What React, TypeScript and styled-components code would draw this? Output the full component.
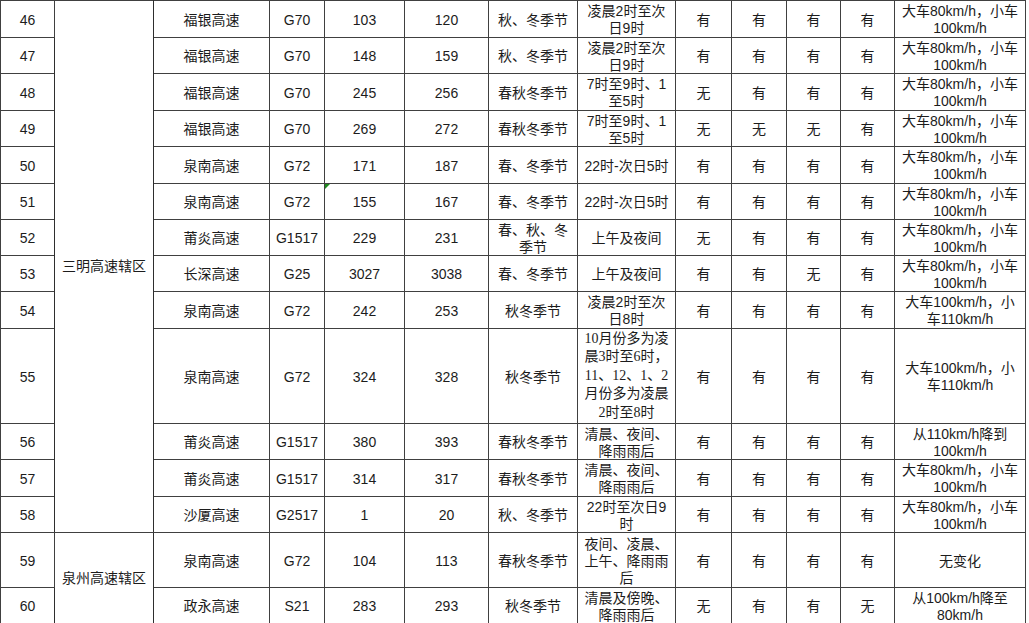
import React from "react";
import styled, { createGlobalStyle } from "styled-components";

const GlobalStyle = createGlobalStyle`
  html, body {
    margin: 0;
    padding: 0;
    background: #ffffff;
  }
  body {
    font-family: "Liberation Sans", "Noto Sans CJK SC", sans-serif;
    color: #1c1c1c;
  }
`;

type Flag = "有" | "无";

interface RowData {
  no: number;
  road: string;
  code: string;
  from: string;
  to: string;
  season: string;
  time: string;
  flags: Flag[];
  speed: string;
  height: number;
  serifTime?: boolean;
  marker?: boolean;
}

const SPEED_A = "大车80km/h，小车\n100km/h";
const SPEED_B = "大车100km/h，小\n车110km/h";

const rows: RowData[] = [
  { no: 46, road: "福银高速", code: "G70", from: "103", to: "120", season: "秋、冬季节", time: "凌晨2时至次\n日9时", flags: ["有", "有", "有", "有"], speed: SPEED_A, height: 37 },
  { no: 47, road: "福银高速", code: "G70", from: "148", to: "159", season: "秋、冬季节", time: "凌晨2时至次\n日9时", flags: ["有", "有", "有", "有"], speed: SPEED_A, height: 36 },
  { no: 48, road: "福银高速", code: "G70", from: "245", to: "256", season: "春秋冬季节", time: "7时至9时、1\n至5时", flags: ["无", "有", "有", "有"], speed: SPEED_A, height: 37 },
  { no: 49, road: "福银高速", code: "G70", from: "269", to: "272", season: "春秋冬季节", time: "7时至9时、1\n至5时", flags: ["无", "无", "无", "有"], speed: SPEED_A, height: 36 },
  { no: 50, road: "泉南高速", code: "G72", from: "171", to: "187", season: "春、冬季节", time: "22时-次日5时", flags: ["有", "有", "有", "有"], speed: SPEED_A, height: 37 },
  { no: 51, road: "泉南高速", code: "G72", from: "155", to: "167", season: "春、冬季节", time: "22时-次日5时", flags: ["有", "有", "有", "有"], speed: SPEED_A, height: 36, marker: true },
  { no: 52, road: "莆炎高速", code: "G1517", from: "229", to: "231", season: "春、秋、冬\n季节", time: "上午及夜间", flags: ["无", "有", "有", "有"], speed: SPEED_A, height: 36 },
  { no: 53, road: "长深高速", code: "G25", from: "3027", to: "3038", season: "春、冬季节", time: "上午及夜间", flags: ["有", "有", "无", "有"], speed: SPEED_A, height: 36 },
  { no: 54, road: "泉南高速", code: "G72", from: "242", to: "253", season: "秋冬季节", time: "凌晨2时至次\n日8时", flags: ["有", "有", "有", "有"], speed: SPEED_B, height: 37 },
  { no: 55, road: "泉南高速", code: "G72", from: "324", to: "328", season: "秋冬季节", time: "10月份多为凌\n晨3时至6时，\n11、12、1、2\n月份多为凌晨\n2时至8时", flags: ["有", "有", "有", "有"], speed: SPEED_B, height: 95, serifTime: true },
  { no: 56, road: "莆炎高速", code: "G1517", from: "380", to: "393", season: "春秋冬季节", time: "清晨、夜间、\n降雨雨后", flags: ["有", "有", "有", "有"], speed: "从110km/h降到\n100km/h", height: 36 },
  { no: 57, road: "莆炎高速", code: "G1517", from: "314", to: "317", season: "春秋冬季节", time: "清晨、夜间、\n降雨雨后", flags: ["有", "有", "有", "有"], speed: SPEED_A, height: 37 },
  { no: 58, road: "沙厦高速", code: "G2517", from: "1", to: "20", season: "秋、冬季节", time: "22时至次日9\n时", flags: ["有", "有", "有", "有"], speed: SPEED_A, height: 36 },
  { no: 59, road: "泉南高速", code: "G72", from: "104", to: "113", season: "春秋冬季节", time: "夜间、凌晨、\n上午、降雨雨\n后", flags: ["有", "有", "有", "有"], speed: "无变化", height: 55 },
  { no: 60, road: "政永高速", code: "S21", from: "283", to: "293", season: "秋冬季节", time: "清晨及傍晚、\n降雨雨后", flags: ["无", "有", "有", "无"], speed: "从100km/h降至\n80km/h", height: 36 },
];

const regions: Record<number, { name: string; span: number }> = {
  46: { name: "三明高速辖区", span: 13 },
  59: { name: "泉州高速辖区", span: 2 },
};

const columnWidths = [54, 99, 116, 55, 80, 84, 89, 98, 56, 55, 54, 54, 131];

const Sheet = styled.table`
  width: 1025px;
  table-layout: fixed;
  border-collapse: collapse;
  font-size: 14px;
`;

const Cell = styled.td`
  position: relative;
  border: 1px solid #404040;
  padding: 0;
  text-align: center;
  vertical-align: middle;
  color: #1c1c1c;
`;

const RegionCell = styled(Cell)`
  padding: 0 2px;
  line-height: 17px;
  border-left-color: #2e2e2e;
  border-right-color: #2e2e2e;
`;

const Content = styled.div<{ $h: number; $serif?: boolean }>`
  height: ${(p) => p.$h - 1}px;
  display: flex;
  flex-direction: column;
  justify-content: center;
  align-items: center;
  padding-top: ${(p) => (p.$serif ? 0 : 2)}px;
  box-sizing: border-box;
  overflow: hidden;
  font-family: ${(p) =>
    p.$serif
      ? `"Liberation Serif", "Noto Sans CJK SC", serif`
      : `"Liberation Sans", "Noto Sans CJK SC", sans-serif`};
`;

const Line = styled.span<{ $lh: number }>`
  display: block;
  flex: none;
  height: ${(p) => p.$lh}px;
  line-height: ${(p) => p.$lh}px;
  white-space: nowrap;
`;

const ErrorMark = styled.span`
  position: absolute;
  left: 0;
  top: 0;
  width: 0;
  height: 0;
  border-top: 5px solid #1f8a1f;
  border-right: 5px solid transparent;
`;

function Text({ value, h, serif }: { value: string | number; h: number; serif?: boolean }) {
  const lines = String(value).split("\n");
  const lh = serif ? 18.5 : 17;
  return (
    <Content $h={h} $serif={serif}>
      {lines.map((l, i) => (
        <Line key={i} $lh={lh}>
          {l}
        </Line>
      ))}
    </Content>
  );
}

export default function App() {
  return (
    <>
      <GlobalStyle />
      <Sheet>
        <colgroup>
          {columnWidths.map((w, i) => (
            <col key={i} style={{ width: w }} />
          ))}
        </colgroup>
        <tbody>
          {rows.map((r) => {
            const region = regions[r.no];
            const h = r.height;
            return (
              <tr key={r.no}>
                <Cell>
                  <Text value={r.no} h={h} />
                </Cell>
                {region && <RegionCell rowSpan={region.span}>{region.name}</RegionCell>}
                <Cell>
                  <Text value={r.road} h={h} />
                </Cell>
                <Cell>
                  <Text value={r.code} h={h} />
                </Cell>
                <Cell>
                  {r.marker && <ErrorMark />}
                  <Text value={r.from} h={h} />
                </Cell>
                <Cell>
                  <Text value={r.to} h={h} />
                </Cell>
                <Cell>
                  <Text value={r.season} h={h} />
                </Cell>
                <Cell>
                  <Text value={r.time} h={h} serif={r.serifTime} />
                </Cell>
                {r.flags.map((f, i) => (
                  <Cell key={i}>
                    <Text value={f} h={h} />
                  </Cell>
                ))}
                <Cell>
                  <Text value={r.speed} h={h} />
                </Cell>
              </tr>
            );
          })}
        </tbody>
      </Sheet>
    </>
  );
}
